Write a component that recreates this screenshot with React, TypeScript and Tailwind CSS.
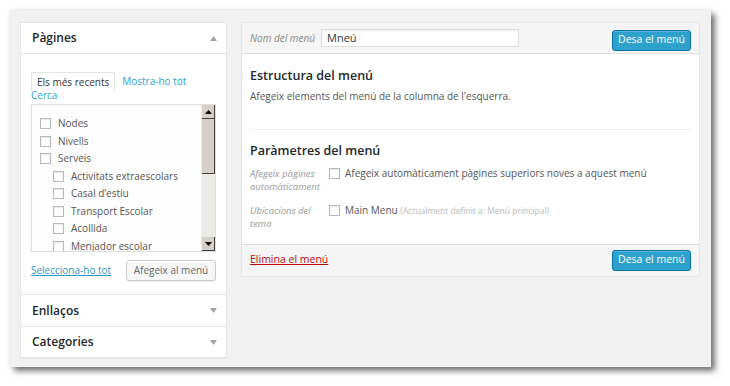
import React from "react";

const font = { fontFamily: '"Open Sans", "Liberation Sans", sans-serif' };

type Item = { label: string; child?: boolean };

const ITEMS: Item[] = [
  { label: "Nodes" },
  { label: "Nivells" },
  { label: "Serveis" },
  { label: "Activitats extraescolars", child: true },
  { label: "Casal d’estiu", child: true },
  { label: "Transport Escolar", child: true },
  { label: "Acollida", child: true },
  { label: "Menjador escolar", child: true },
];

function Box() {
  return (
    <span className="inline-block w-[11px] h-[11px] shrink-0 border border-[#b4b9be] bg-white shadow-[inset_0_1px_2px_rgba(0,0,0,0.1)]" />
  );
}

function Arrow({ up }: { up?: boolean }) {
  return (
    <svg width="7" height="5" viewBox="0 0 7 5" className="shrink-0">
      {up ? (
        <path d="M0 5 L3.5 0 L7 5 Z" fill="#a0a5aa" />
      ) : (
        <path d="M0 0 L3.5 5 L7 0 Z" fill="#a0a5aa" />
      )}
    </svg>
  );
}

function Button({ children }: { children: React.ReactNode }) {
  return (
    <button className="h-[21px] w-[79px] rounded-[3px] border border-[#0074a2] bg-[#2ea2cc] text-[10.5px] text-white shadow-[inset_0_1px_0_rgba(120,200,230,0.5)]">
      {children}
    </button>
  );
}

function Scrollbar() {
  return (
    <div className="flex w-[14px] flex-col border-l border-[#eee] bg-[#f1efeb]">
      <div className="flex h-[14px] items-center justify-center border-r border-b border-[#404040] bg-[#d4d0c8]">
        <svg width="7" height="4" viewBox="0 0 7 4">
          <path d="M0 4 L3.5 0 L7 4 Z" fill="#000" />
        </svg>
      </div>
      <div className="h-[55px] border-r border-b border-[#404040] bg-[#d4d0c8]" />
      <div className="flex-1 bg-[#eceae6]" />
      <div className="flex h-[14px] items-center justify-center border-r border-b border-[#404040] bg-[#d4d0c8]">
        <svg width="7" height="4" viewBox="0 0 7 4">
          <path d="M0 0 L3.5 4 L7 0 Z" fill="#000" />
        </svg>
      </div>
    </div>
  );
}

function LeftPanel() {
  return (
    <div className="w-[207px] shrink-0 self-start border border-[#e5e5e5] bg-white shadow-[0_1px_1px_rgba(0,0,0,0.04)]">
      <div className="flex h-[31px] items-center justify-between border-b border-[#e5e5e5] pl-[11px] pr-[9px]">
        <span className="text-[12px] font-semibold text-[#23282d]">Pàgines</span>
        <Arrow up />
      </div>
      <div className="px-[10px] pt-[18px]">
        <div className="flex h-[19px] items-end">
          <span className="flex h-[19px] items-center border border-b-0 border-[#e5e5e5] px-[5px] text-[10px] text-[#333]">
            Els més recents
          </span>
          <span className="ml-[7px] flex h-[19px] items-center text-[10px] text-[#2ea2cc]">Mostra-ho tot</span>
        </div>
        <div className="-mt-[1px] text-[10px] leading-[11px] text-[#2ea2cc]">Cerca</div>
        <div className="mt-[3px] flex h-[148px] border border-[#ddd] bg-[#fdfdfd]">
          <div className="flex-1 overflow-hidden pt-[10px] pl-[8px]">
            {ITEMS.map((it) => (
              <div
                key={it.label}
                className={`flex h-[17.5px] items-center gap-[7px] text-[10px] text-[#555] ${it.child ? "pl-[13px]" : ""}`}
              >
                <Box />
                <span>{it.label}</span>
              </div>
            ))}
          </div>
          <Scrollbar />
        </div>
        <div className="flex items-center justify-between pt-[8px] pb-[13px]">
          <a className="text-[10px] text-[#2a95c5] underline">Selecciona-ho tot</a>
          <button className="h-[21px] w-[90px] rounded-[3px] border border-[#ccc] bg-[#f7f7f7] text-[10px] text-[#666] shadow-[inset_0_1px_0_#fff,0_1px_0_rgba(0,0,0,0.08)]">
            Afegeix al menú
          </button>
        </div>
      </div>
      <div className="flex h-[32px] items-center justify-between border-t border-[#e5e5e5] pl-[11px] pr-[9px]">
        <span className="text-[12px] font-semibold text-[#23282d]">Enllaços</span>
        <Arrow />
      </div>
      <div className="flex h-[31px] items-center justify-between border-t border-[#e5e5e5] pl-[11px] pr-[9px]">
        <span className="text-[12px] font-semibold text-[#23282d]">Categories</span>
        <Arrow />
      </div>
    </div>
  );
}

function RightPanel() {
  return (
    <div className="w-[459px] shrink-0 self-start border border-[#e5e5e5] bg-white">
      <div className="flex h-[31px] items-center border-b border-[#dfdfdf] bg-[#f5f5f5] pl-[8px] pr-[8px]">
        <span className="w-[71px] text-[10px] italic text-[#888]">Nom del menú</span>
        <div className="flex h-[18px] w-[198px] items-center border border-[#ddd] bg-white px-[5px] text-[11px] text-[#333] shadow-[inset_0_1px_2px_rgba(0,0,0,0.07)]">
          Mneú
        </div>
        <div className="ml-auto">
          <Button>Desa el menú</Button>
        </div>
      </div>
      <div className="px-[8px]">
        <div className="pt-[13px] text-[12.5px] font-semibold text-[#23282d]">Estructura del menú</div>
        <div className="pt-[3px] text-[10px] text-[#555]">Afegeix elements del menú de la columna de l'esquerra.</div>
        <div className="mt-[25px] border-t border-[#eee]" />
        <div className="pt-[12px] text-[12.5px] font-semibold text-[#23282d]">Paràmetres del menú</div>
        <div className="flex pt-[6px]">
          <div className="w-[79px] text-[9.5px] italic leading-[13px] text-[#999]">
            Afegeix pàgines automàticament
          </div>
          <div className="flex h-[14px] items-center gap-[5px] text-[10px] text-[#555]">
            <Box />
            <span>Afegeix automàticament pàgines superiors noves a aquest menú</span>
          </div>
        </div>
        <div className="flex pt-[11px] pb-[14px]">
          <div className="w-[79px] text-[9.5px] italic leading-[13px] text-[#999]">
            Ubicacions del tema
          </div>
          <div className="flex h-[14px] items-center gap-[5px] text-[10px] text-[#555]">
            <Box />
            <span>
              Main Menu <span className="text-[8.5px] text-[#bbb]">(Actualment definit a: Menú principal)</span>
            </span>
          </div>
        </div>
      </div>
      <div className="flex h-[32px] items-center justify-between border-t border-[#dfdfdf] bg-[#f5f5f5] px-[8px]">
        <a className="text-[10.5px] text-[#bc0b0b] underline">Elimina el menú</a>
        <Button>Desa el menú</Button>
      </div>
    </div>
  );
}

export default function App() {
  return (
    <div className="h-[386px] w-[730px] bg-white pt-[10px] pl-[10px]" style={font}>
      <div className="flex h-[357px] w-[701px] gap-[14px] bg-[#f1f1f1] pt-[12px] pl-[10px] shadow-[4px_4px_6px_rgba(0,0,0,0.55),0_0_4px_rgba(0,0,0,0.08)]">
        <LeftPanel />
        <RightPanel />
      </div>
    </div>
  );
}
